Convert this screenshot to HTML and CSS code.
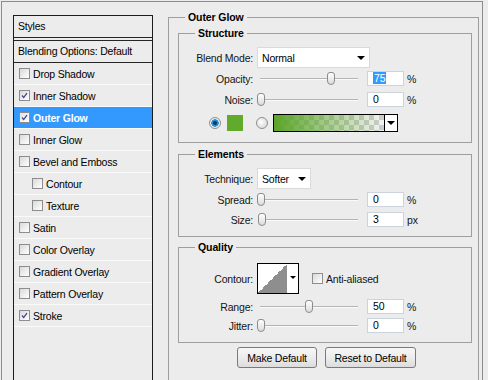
FILE: index.html
```html
<!DOCTYPE html>
<html>
<head>
<meta charset="utf-8">
<title>Layer Style - Outer Glow</title>
<link rel="stylesheet" href="styles.css">
</head>
<body>
<div class="frame">
  <div class="styles-panel">
    <div class="sp-header">Styles</div>
    <div class="sp-blend">Blending Options: Default</div>
    <div class="sp-row"><span class="cb"></span>Drop Shadow</div>
    <div class="sp-row"><span class="cb"><svg viewBox="0 0 11 11"><path d="M2.5 5.5 L4.5 8 L8.5 2.5" /></svg></span>Inner Shadow</div>
    <div class="sp-row active"><span class="cb"><svg viewBox="0 0 11 11"><path d="M2.5 5.5 L4.5 8 L8.5 2.5" /></svg></span>Outer Glow</div>
    <div class="sp-row"><span class="cb"></span>Inner Glow</div>
    <div class="sp-row"><span class="cb"></span>Bevel and Emboss</div>
    <div class="sp-row sub"><span class="cb"></span>Contour</div>
    <div class="sp-row sub"><span class="cb"></span>Texture</div>
    <div class="sp-row"><span class="cb"></span>Satin</div>
    <div class="sp-row"><span class="cb"></span>Color Overlay</div>
    <div class="sp-row"><span class="cb"></span>Gradient Overlay</div>
    <div class="sp-row"><span class="cb"></span>Pattern Overlay</div>
    <div class="sp-row"><span class="cb"><svg viewBox="0 0 11 11"><path d="M2.5 5.5 L4.5 8 L8.5 2.5" /></svg></span>Stroke</div>
  </div>

  <div class="group outer">
    <div class="legend">Outer Glow</div>

    <div class="group structure">
      <div class="legend">Structure</div>
      <div class="row h21">
        <span class="label">Blend Mode:</span>
        <div class="select wide"><span>Normal</span><span class="arrow"></span></div>
      </div>
      <div class="row h15 mt3">
        <span class="label">Opacity:</span>
        <div class="slider"><div class="track"></div><div class="thumb" style="left:70px"></div></div>
        <div class="num"><span class="sel">75</span></div>
        <span class="unit">%</span>
      </div>
      <div class="row h15 mt6">
        <span class="label">Noise:</span>
        <div class="slider"><div class="track"></div><div class="thumb" style="left:0px"></div></div>
        <div class="num">0</div>
        <span class="unit">%</span>
      </div>
      <div class="row color-row">
        <span class="radio on"></span>
        <span class="swatch"></span>
        <span class="radio"></span>
        <div class="gradient"><div class="grad-fill"></div><div class="grad-arrow"><span class="arrow"></span></div></div>
      </div>
    </div>

    <div class="group elements">
      <div class="legend">Elements</div>
      <div class="row h21">
        <span class="label">Technique:</span>
        <div class="select narrow"><span>Softer</span><span class="arrow"></span></div>
      </div>
      <div class="row h15 mt3">
        <span class="label">Spread:</span>
        <div class="slider"><div class="track"></div><div class="thumb" style="left:0px"></div></div>
        <div class="num">0</div>
        <span class="unit">%</span>
      </div>
      <div class="row h15 mt5">
        <span class="label">Size:</span>
        <div class="slider"><div class="track"></div><div class="thumb" style="left:1px"></div></div>
        <div class="num">3</div>
        <span class="unit">px</span>
      </div>
    </div>

    <div class="group quality">
      <div class="legend">Quality</div>
      <div class="row contour-row">
        <span class="label">Contour:</span>
        <div class="contour"><div class="ct-shape"></div><div class="ct-arrow"><span class="arrow small"></span></div></div>
        <span class="cb aa"></span><span>Anti-aliased</span>
      </div>
      <div class="row h15 mt5">
        <span class="label">Range:</span>
        <div class="slider"><div class="track"></div><div class="thumb" style="left:48px"></div></div>
        <div class="num">50</div>
        <span class="unit">%</span>
      </div>
      <div class="row h15 mt4">
        <span class="label">Jitter:</span>
        <div class="slider"><div class="track"></div><div class="thumb" style="left:0px"></div></div>
        <div class="num">0</div>
        <span class="unit">%</span>
      </div>
    </div>

    <div class="buttons">
      <button class="btn make">Make Default</button>
      <button class="btn reset">Reset to Default</button>
    </div>
  </div>
</div>
</body>
</html>
```

FILE: styles.css
```css
html, body {
  margin: 0;
  padding: 0;
}
body {
  background: #ececec;
  font-family: "Liberation Sans", Arial, sans-serif;
  font-size: 10.5px;
  letter-spacing: -0.2px;
  color: #141414;
  width: 488px;
  height: 380px;
  overflow: hidden;
}
* { box-sizing: border-box; }

.frame {
  margin: 1px 0 0 1px;
  width: 482px;
  height: 379px;
  border: 1px solid #8c8c8c;
  border-bottom: none;
  display: flex;
  align-items: flex-start;
  padding: 13px 3px 0 11px;
}

/* ---------- left styles list ---------- */
.styles-panel {
  width: 140px;
  height: 370px;
  flex: none;
  border: 1px solid #1c1c1c;
  border-bottom: none;
  color: #000;
}
.sp-header {
  height: 22px;
  line-height: 21px;
  padding-left: 4px;
  border-bottom: 1px solid #262626;
}
.sp-blend {
  margin-top: 2px;
  height: 23px;
  line-height: 21px;
  padding-left: 4px;
  border-top: 1px solid #262626;
  border-bottom: 1px solid #262626;
}
.sp-row {
  height: 22px;
  display: flex;
  align-items: center;
  padding-left: 5px;
  border-bottom: 1px solid #fafafa;
}
.sp-row.sub { padding-left: 18px; }
.sp-row.active {
  background: #3399ff;
  color: #fff;
  font-weight: bold;
}

.cb {
  width: 11px;
  height: 11px;
  flex: none;
  margin-right: 3px;
  border: 1px solid #8d8d8d;
  background: linear-gradient(135deg, #d9d9d9 0%, #f4f4f4 70%, #ffffff 100%);
  display: inline-flex;
}
.sp-row.active .cb { background: linear-gradient(135deg, #e2e2e2, #ffffff); }
.cb svg {
  width: 9px;
  height: 9px;
}
.cb svg path {
  fill: none;
  stroke: #3b3f8e;
  stroke-width: 1.5;
}

/* ---------- group boxes ---------- */
.group {
  border: 1px solid #9e9e9e;
  position: relative;
}
.legend {
  position: absolute;
  top: -8px;
  left: 16px;
  padding: 0 3px;
  line-height: 14px;
  background: #ececec;
  font-weight: bold;
  letter-spacing: -0.1px;
  color: #000;
}
.group.outer {
  width: 311px;
  height: 370px;
  flex: none;
  margin: 2px 0 0 15px;
  padding: 15px 6px 0 9px;
}
.structure { padding: 13px 0 10px 0; }
.elements { margin-top: 11px; padding: 13px 0 9px 0; }
.quality { margin-top: 10px; padding: 15px 0 9px 0; }

.row {
  display: flex;
  align-items: center;
}
.h21 { height: 21px; }
.h15 { height: 15px; }
.mt3 { margin-top: 3px; }
.mt4 { margin-top: 4px; }
.mt5 { margin-top: 5px; }
.mt6 { margin-top: 6px; }

.label {
  width: 74px;
  text-align: right;
  margin-right: 4px;
  flex: none;
}

/* select */
.select {
  height: 21px;
  background: #fff;
  border: 1px solid #dadada;
  display: flex;
  align-items: center;
  justify-content: space-between;
  padding: 0 4px 0 4px;
  color: #000;
}
.select.wide { width: 113px; }
.select.narrow { width: 54px; }
.arrow {
  width: 0;
  height: 0;
  border-left: 4px solid transparent;
  border-right: 4px solid transparent;
  border-top: 4px solid #000;
}
.arrow.small {
  border-left-width: 3px;
  border-right-width: 3px;
  border-top-width: 3px;
}

/* slider */
.slider {
  width: 102px;
  height: 15px;
  position: relative;
  margin-right: 8px;
  flex: none;
}
.track {
  position: absolute;
  left: 3px;
  right: 1px;
  top: 7px;
  height: 2px;
  border-top: 1px solid #b4b4b4;
  background: #fafafa;
}
.thumb {
  position: absolute;
  top: 1px;
  width: 8px;
  height: 13px;
  border: 1px solid #8c8c8c;
  border-radius: 3px 3px 4px 4px;
  background: linear-gradient(#fefefe, #dcdcdc);
}

/* number field */
.num {
  width: 37px;
  height: 15px;
  background: #fff;
  border: 1px solid #cbd3dc;
  padding-left: 5px;
  line-height: 13px;
  color: #000;
  flex: none;
}
.num .sel {
  background: #3399ff;
  color: #fff;
  padding: 0 1px;
}
.unit {
  margin-left: 3px;
}

/* color row */
.color-row {
  height: 18px;
  margin-top: 7px;
  padding-left: 30px;
}
.radio {
  width: 12px;
  height: 12px;
  flex: none;
  border-radius: 50%;
  border: 1px solid #8f8f8f;
  background: radial-gradient(circle at 40% 40%, #ffffff 0, #e6e6e6 50%, #cfcfcf 100%);
  margin-right: 5px;
}
.radio.on {
  margin-right: 6px;
  background: radial-gradient(circle at 50% 50%, #0c3c66 0 1.5px, #2a8fd8 2.5px 3.5px, #f2f2f2 4px, #d6d6d6 100%);
}
.swatch {
  width: 16px;
  height: 16px;
  flex: none;
  background: #62aa2c;
  margin-right: 13px;
}
.gradient {
  width: 125px;
  height: 18px;
  flex: none;
  border: 1px solid #000;
  display: flex;
}
.grad-fill {
  flex: 1;
  border-right: 1px solid #000;
  background:
    linear-gradient(to right, rgba(90,165,40,1) 0%, rgba(90,165,40,0) 100%),
    conic-gradient(#cdcdcd 25%, #f4f4f4 0 50%, #cdcdcd 0 75%, #f4f4f4 0) 0 0 / 10px 10px;
}
.grad-arrow {
  width: 12px;
  background: #fff;
  display: flex;
  align-items: center;
  justify-content: center;
}

/* contour */
.contour-row { height: 31px; }
.contour {
  width: 42px;
  height: 31px;
  flex: none;
  border: 1px solid #000;
  display: flex;
  margin-right: 13px;
  background: #fff;
}
.ct-shape {
  width: 29px;
  background: linear-gradient(to top left, #8e8e8e 50%, #ffffff 50%);
}
.ct-arrow {
  flex: 1;
  display: flex;
  align-items: center;
  justify-content: center;
  padding-bottom: 3px;
}
.cb.aa { margin-right: 3px; }

/* buttons */
.buttons {
  margin-top: 4px;
  display: flex;
  justify-content: center;
  gap: 8px;
  padding-left: 3px;
}
.btn {
  height: 21px;
  border: 1px solid #7a7a7a;
  border-radius: 3px;
  background: linear-gradient(#f7f7f7 0%, #ececec 50%, #dcdcdc 100%);
  font-family: "Liberation Sans", Arial, sans-serif;
  font-size: 10.5px;
  letter-spacing: -0.2px;
  color: #000;
  padding: 0;
}
.btn.make { width: 80px; }
.btn.reset { width: 91px; }
```
